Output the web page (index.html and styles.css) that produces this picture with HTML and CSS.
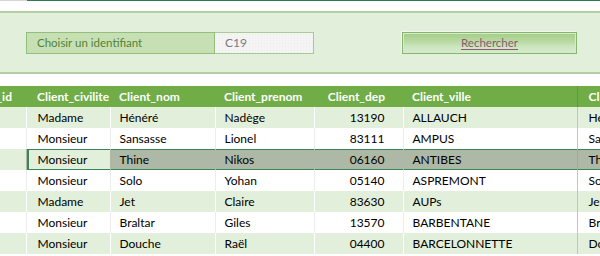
FILE: index.html
```html
<!DOCTYPE html>
<html lang="fr">
<head>
<meta charset="utf-8">
<title>Recherche client</title>
<link rel="stylesheet" href="styles.css">
</head>
<body>
<div class="topline"><span class="tl-a"></span><span class="tl-b"></span></div>
<div class="panel">
  <div class="controls">
    <div class="label">Choisir un identifiant</div>
    <div class="value">C19</div>
    <div class="btn"><span>Rechercher</span></div>
  </div>
</div>
<div class="tablewrap">
  <table class="grid">
    <colgroup>
      <col class="c-id"><col class="c-civ"><col class="c-nom"><col class="c-pre"><col class="c-dep"><col class="c-vil"><col class="c-last">
    </colgroup>
    <thead>
      <tr><th>Client_id</th><th class="civ">Client_civilite</th><th>Client_nom</th><th>Client_prenom</th><th class="num">Client_dep</th><th>Client_ville</th><th class="last">Client_identite</th></tr>
    </thead>
    <tbody>
      <tr class="band"><td></td><td class="civ">Madame</td><td>Hénéré</td><td>Nadège</td><td class="num">13190</td><td>ALLAUCH</td><td class="last">Hénéré Nadège</td></tr>
      <tr><td></td><td class="civ">Monsieur</td><td>Sansasse</td><td>Lionel</td><td class="num">83111</td><td>AMPUS</td><td class="last">Sansasse Lionel</td></tr>
      <tr class="band sel"><td></td><td class="civ active">Monsieur</td><td>Thine</td><td>Nikos</td><td class="num">06160</td><td>ANTIBES</td><td class="last">Thine Nikos</td></tr>
      <tr><td></td><td class="civ">Monsieur</td><td>Solo</td><td>Yohan</td><td class="num">05140</td><td>ASPREMONT</td><td class="last">Solo Yohan</td></tr>
      <tr class="band"><td></td><td class="civ">Madame</td><td>Jet</td><td>Claire</td><td class="num">83630</td><td>AUPs</td><td class="last">Jet Claire</td></tr>
      <tr><td></td><td class="civ">Monsieur</td><td>Braltar</td><td>Giles</td><td class="num">13570</td><td>BARBENTANE</td><td class="last">Braltar Giles</td></tr>
      <tr class="band"><td></td><td class="civ">Monsieur</td><td>Douche</td><td>Raël</td><td class="num">04400</td><td>BARCELONNETTE</td><td class="last">Douche Raël</td></tr>
    </tbody>
  </table>
</div>
</body>
</html>
```
FILE: styles.css
```css
html, body {
  margin: 0;
  padding: 0;
}
body {
  width: 600px;
  height: 256px;
  overflow: hidden;
  background: #ffffff;
  font-family: Lato, "Liberation Sans", Arial, sans-serif;
  font-size: 12px;
  color: #000000;
}
.topline {
  display: flex;
  height: 1px;
}
.tl-a {
  width: 27px;
  background: #d6d6d6;
}
.tl-b {
  flex: 1;
  background: #2f7a4e;
}
.panel {
  margin-top: 10px;
  height: 63px;
  box-sizing: border-box;
  background: #e2efda;
  border-top: 2px solid #b3cfa3;
  border-bottom: 2px solid #b3cfa3;
  padding-top: 19px;
}
.controls {
  display: flex;
  padding-left: 26px;
  height: 22px;
}
.label {
  width: 189px;
  box-sizing: border-box;
  background: #c6e0b4;
  border: 1px solid #93bf7c;
  color: #548235;
  padding-left: 10px;
  line-height: 20px;
  font-size: 11.5px;
}
.value {
  width: 99px;
  box-sizing: border-box;
  background-color: #f4f4f4;
  background-image: radial-gradient(#ebebeb 0.6px, transparent 0.8px);
  background-size: 3px 3px;
  border: 1px solid #a9cc95;
  border-left: none;
  color: #7b7b7b;
  padding-left: 10px;
  line-height: 20px;
}
.btn {
  margin-left: 88px;
  width: 175px;
  box-sizing: border-box;
  border: 1px solid #86b571;
  box-shadow: -1px -1px 0 #f2f8ee, inset 0 0 0 1px #d7ebcb;
  background: linear-gradient(#a3cd87 0%, #badba4 45%, #cde6bf 70%, #d6ead0 100%);
  text-align: center;
  line-height: 20px;
  font-size: 11.5px;
}
.btn span {
  color: #8a5a70;
  text-decoration: underline;
  text-underline-offset: 2px;
}
.tablewrap {
  margin-top: 12px;
  overflow: hidden;
  width: 600px;
}
.grid {
  border-collapse: collapse;
  table-layout: fixed;
  width: 743px;
  margin-left: -46px;
}
.c-id { width: 72px; }
.c-civ { width: 84px; }
.c-nom { width: 105px; }
.c-pre { width: 99px; }
.c-dep { width: 89px; }
.c-vil { width: 174px; }
.c-last { width: 120px; }
.grid th,
.grid td {
  height: 21px;
  padding: 0 0 0 9px;
  line-height: 21px;
  white-space: nowrap;
  overflow: hidden;
  text-align: left;
  box-sizing: border-box;
}
.grid th:first-child,
.grid .civ,
.grid .last {
  padding-left: 11px;
}
.grid th {
  background: #70ad47;
  color: #ffffff;
  font-weight: 700;
}
.grid th.last {
  border-left: 1px solid #5f9a3a;
}
.grid td {
  border-left: 1px solid #ececec;
}
.grid td:first-child {
  border-left: none;
}
.grid tr.band td {
  background: #e2efda;
  border-left-color: #ffffff;
}
.grid td.last {
  border-left: 1px solid #c4c4c4;
}
.grid tr.band td.last {
  border-left-color: #c4c4c4;
}
.grid .num {
  text-align: right;
  padding-right: 18px;
}
.grid tr.sel td {
  background: #adb9a6;
  border-left-color: #adb9a6;
  box-shadow: inset 0 1px 0 #3b8658, inset 0 -1px 0 #3b8658;
}
.grid tr.sel td:first-child {
  background: #e2efda;
  box-shadow: none;
}
.grid tr.sel td.active {
  background: #e2efda;
  box-shadow: inset 2px 0 0 #3b8658, inset 0 1px 0 #3b8658, inset 0 -1px 0 #3b8658;
}
.grid tr.sel td.last {
  border-left-color: #a0a89a;
}
```
